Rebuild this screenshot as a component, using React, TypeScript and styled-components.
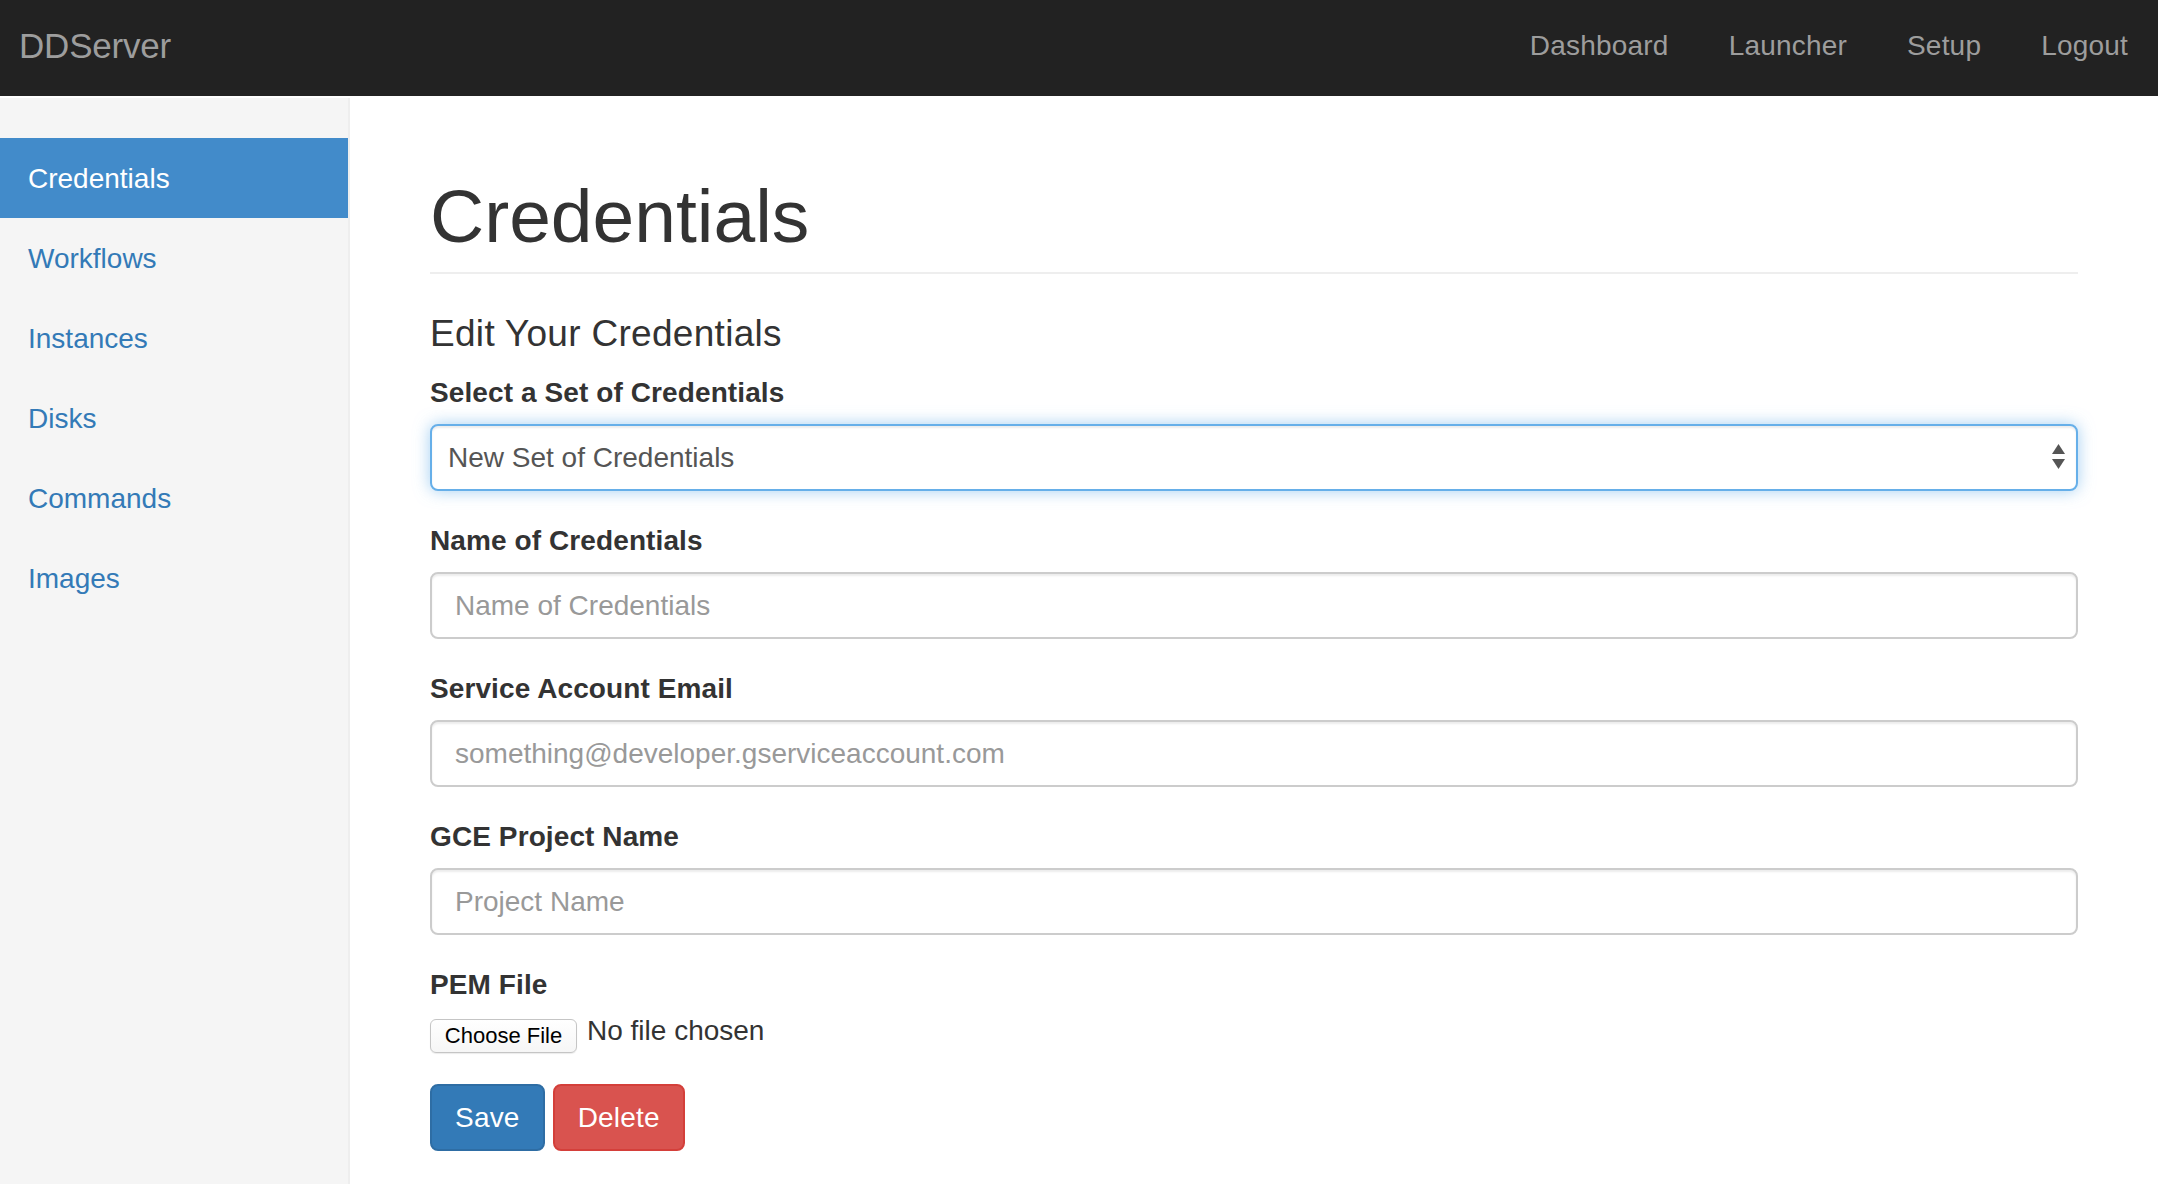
import React from "react";
import styled, { createGlobalStyle } from "styled-components";

const GlobalStyle = createGlobalStyle`
  html, body { margin: 0; padding: 0; background: #fff; }
  body {
    font-family: "Liberation Sans", Arial, Helvetica, sans-serif;
    color: #333;
    font-size: 28px;
    line-height: 40px;
  }
  * { box-sizing: border-box; }
`;

const Page = styled.div`
  width: 2158px;
  min-height: 1184px;
  display: flex;
  flex-direction: column;
`;

const Navbar = styled.nav`
  height: 96px;
  background: #222;
  display: flex;
  align-items: center;
  justify-content: space-between;
  flex-shrink: 0;
`;

const Brand = styled.a`
  color: #9d9d9d;
  font-size: 35px;
  letter-spacing: -0.2px;
  padding-left: 19px;
  text-decoration: none;
  line-height: 40px;
  margin-top: -4px;
`;

const NavLinks = styled.ul`
  list-style: none;
  margin: 0;
  padding: 0;
  display: flex;
`;

const NavLink = styled.a`
  display: block;
  color: #9d9d9d;
  font-size: 28px;
  letter-spacing: 0.2px;
  padding: 0 30px;
  line-height: 40px;
  text-decoration: none;
  margin-top: -4px;
`;

const Body = styled.div`
  display: flex;
  flex: 1;
  padding-top: 2px;
`;

const Sidebar = styled.aside`
  width: 350px;
  flex-shrink: 0;
  background: #f5f5f5;
  border-right: 2px solid #eee;
  padding-top: 40px;
  min-height: 1086px;
`;

const SideList = styled.ul`
  list-style: none;
  margin: 0;
  padding: 0;
`;

const SideLink = styled.a<{ $active?: boolean }>`
  display: block;
  height: 80px;
  padding: 21px 28px 19px;
  font-size: 28px;
  line-height: 40px;
  text-decoration: none;
  color: ${(p) => (p.$active ? "#fff" : "#337ab7")};
  background: ${(p) => (p.$active ? "#428bca" : "transparent")};
`;

const Main = styled.main`
  flex: 1;
  padding: 79px 80px 40px 80px;
`;

const PageHeader = styled.div`
  border-bottom: 2px solid #eee;
  padding-bottom: 17px;
`;

const H1 = styled.h1`
  margin: 0;
  font-size: 75px;
  font-weight: 500;
  line-height: 78px;
  letter-spacing: 0;
  color: #333;
`;

const H4 = styled.h4`
  margin: 40px 0 19px;
  font-size: 37px;
  font-weight: 500;
  line-height: 40px;
  letter-spacing: 0.3px;
  color: #333;
`;

const FormGroup = styled.div`
  margin-bottom: 30px;
`;

const Label = styled.label`
  display: block;
  font-weight: 700;
  font-size: 28px;
  line-height: 40px;
  letter-spacing: 0.1px;
  margin-bottom: 11px;
  color: #333;
`;

const SelectWrap = styled.div`
  position: relative;
`;

const Select = styled.select`
  appearance: none;
  -webkit-appearance: none;
  display: block;
  width: 100%;
  height: 67px;
  padding: 0 24px 0 16px;
  font-family: inherit;
  font-size: 28px;
  color: #555;
  background: #fff;
  border: 2px solid #66afe9;
  border-radius: 8px;
  outline: none;
  box-shadow: inset 0 2px 2px rgba(0, 0, 0, 0.075), 0 0 16px rgba(102, 175, 233, 0.6);
`;

const Arrows = styled.svg`
  position: absolute;
  right: 13px;
  top: 20px;
  pointer-events: none;
`;

const Input = styled.input`
  display: block;
  width: 100%;
  height: 67px;
  padding: 0 23px;
  font-family: inherit;
  font-size: 28px;
  color: #555;
  background: #fff;
  border: 2px solid #ccc;
  border-radius: 8px;
  outline: none;
  box-shadow: inset 0 2px 2px rgba(0, 0, 0, 0.075);
  &::placeholder { color: #999; opacity: 1; }
`;

const FileRow = styled.div`
  display: flex;
  align-items: flex-start;
  gap: 10px;
  height: 36px;
`;

const FileButton = styled.button`
  height: 34px;
  width: 147px;
  padding: 0;
  font-family: inherit;
  font-size: 22px;
  line-height: 30px;
  color: #000;
  background: linear-gradient(#fff, #f6f6f6);
  border: 1px solid #c5c5c5;
  border-radius: 6px;
  box-shadow: 0 1px 1px rgba(0, 0, 0, 0.08);
  margin-top: 3px;
`;

const FileText = styled.span`
  font-size: 28px;
  line-height: 34px;
  margin-top: -2px;
  color: #333;
`;

const Buttons = styled.div`
  display: flex;
  gap: 8px;
  margin-top: 32px;
`;

const Btn = styled.button<{ $variant: "primary" | "danger" }>`
  height: 67px;
  padding: 0 23px;
  font-family: inherit;
  font-size: 28px;
  letter-spacing: 0.2px;
  color: #fff;
  border-radius: 8px;
  border: 2px solid ${(p) => (p.$variant === "primary" ? "#2e6da4" : "#d43f3a")};
  background: ${(p) => (p.$variant === "primary" ? "#337ab7" : "#d9534f")};
`;

const sideItems = ["Credentials", "Workflows", "Instances", "Disks", "Commands", "Images"];
const topLinks = ["Dashboard", "Launcher", "Setup", "Logout"];

export default function App() {
  return (
    <Page>
      <GlobalStyle />
      <Navbar>
        <Brand href="#">DDServer</Brand>
        <NavLinks>
          {topLinks.map((l) => (
            <li key={l}>
              <NavLink href="#">{l}</NavLink>
            </li>
          ))}
        </NavLinks>
      </Navbar>
      <Body>
        <Sidebar>
          <SideList>
            {sideItems.map((s, i) => (
              <li key={s}>
                <SideLink href="#" $active={i === 0}>
                  {s}
                </SideLink>
              </li>
            ))}
          </SideList>
        </Sidebar>
        <Main>
          <PageHeader>
            <H1>Credentials</H1>
          </PageHeader>
          <H4>Edit Your Credentials</H4>
          <FormGroup>
            <Label>Select a Set of Credentials</Label>
            <SelectWrap>
              <Select defaultValue="new">
                <option value="new">New Set of Credentials</option>
              </Select>
              <Arrows width="13" height="26" viewBox="0 0 13 26">
                <polygon points="6.5,0 13,10 0,10" fill="#555" />
                <polygon points="0,15 13,15 6.5,25" fill="#555" />
              </Arrows>
            </SelectWrap>
          </FormGroup>
          <FormGroup>
            <Label>Name of Credentials</Label>
            <Input placeholder="Name of Credentials" />
          </FormGroup>
          <FormGroup>
            <Label>Service Account Email</Label>
            <Input placeholder="something@developer.gserviceaccount.com" />
          </FormGroup>
          <FormGroup>
            <Label>GCE Project Name</Label>
            <Input placeholder="Project Name" />
          </FormGroup>
          <div>
            <Label>PEM File</Label>
            <FileRow>
              <FileButton type="button">Choose File</FileButton>
              <FileText>No file chosen</FileText>
            </FileRow>
          </div>
          <Buttons>
            <Btn $variant="primary">Save</Btn>
            <Btn $variant="danger">Delete</Btn>
          </Buttons>
        </Main>
      </Body>
    </Page>
  );
}
